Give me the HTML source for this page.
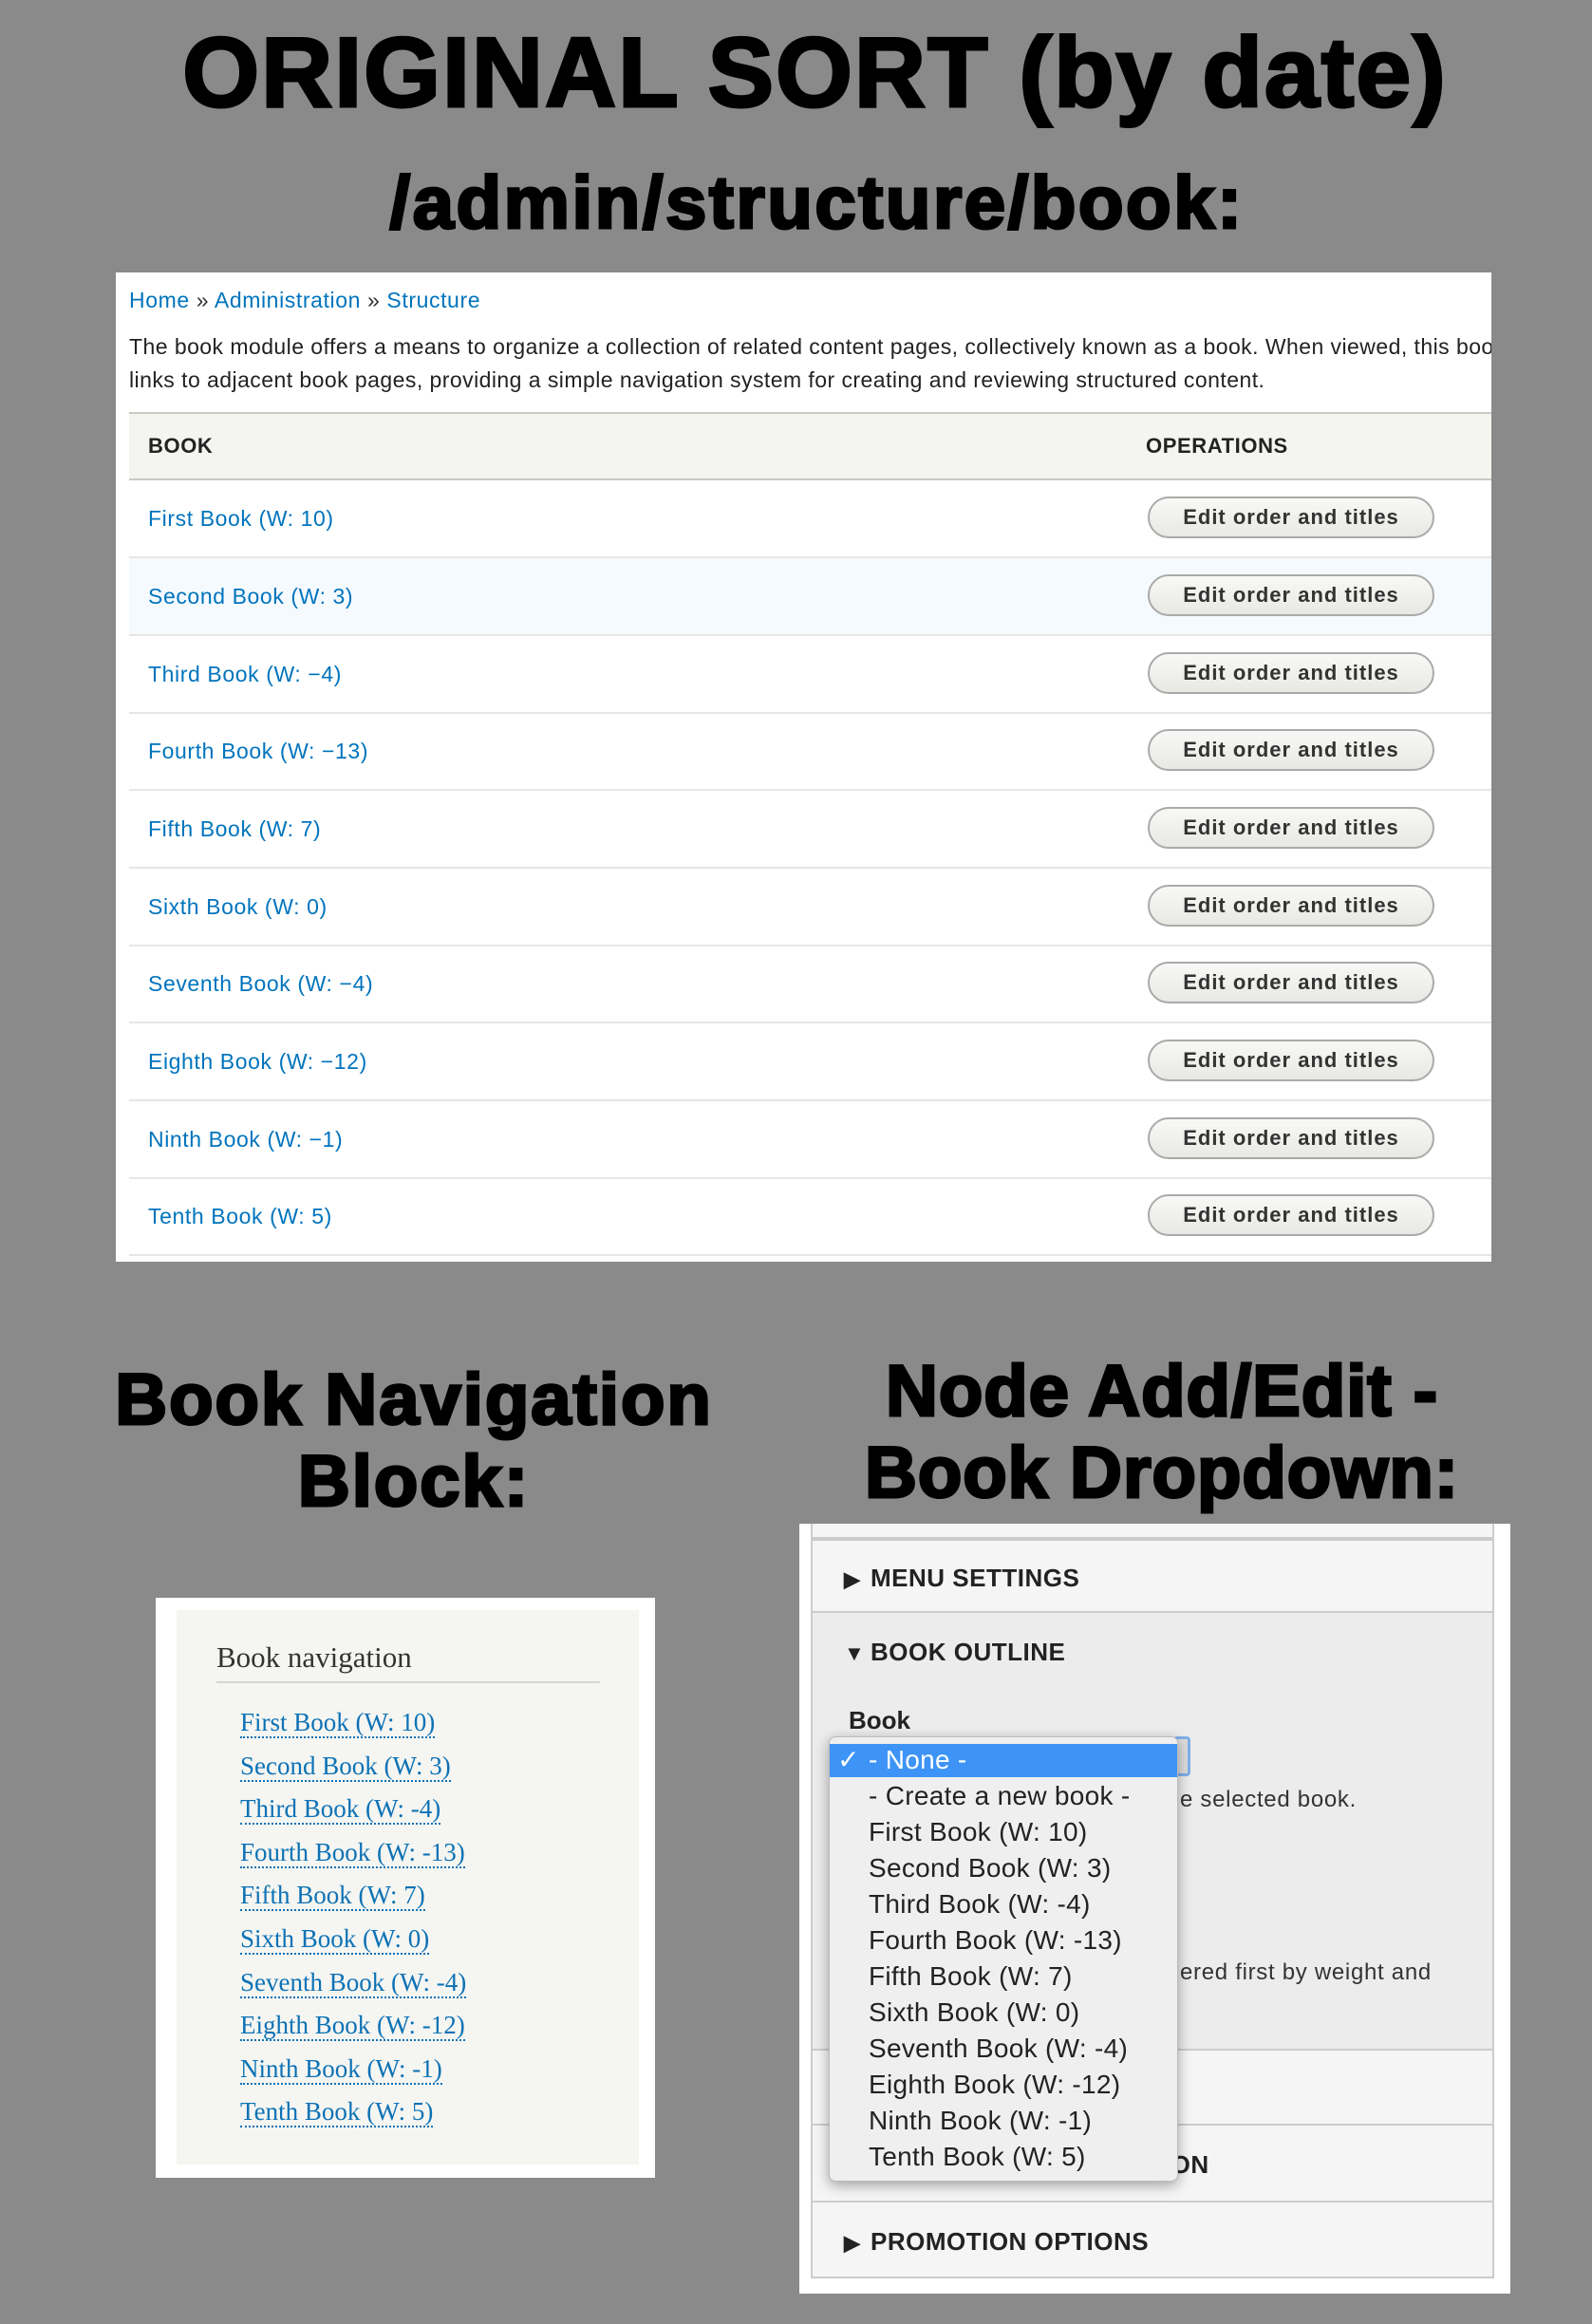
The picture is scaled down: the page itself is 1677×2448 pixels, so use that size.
<!DOCTYPE html>
<html><head><meta charset="utf-8"><style>
*{margin:0;padding:0;box-sizing:border-box}
body{width:1677px;height:2448px;background:#8a8a8a;position:relative;overflow:hidden;font-family:"Liberation Sans",sans-serif}
.h{position:absolute;font-weight:900;color:#000;text-align:center;white-space:nowrap;letter-spacing:2px;-webkit-text-stroke:3px #000}
.a{position:absolute;white-space:nowrap}
#main{position:absolute;left:122px;top:287px;width:1449px;height:1042px;background:#fff;overflow:hidden}
#main a{color:#0074bd;text-decoration:none}
.row{position:absolute;left:14px;width:1500px;height:82px;border-bottom:2px solid #e6e6e3}
.row span{position:absolute;left:20px;top:27px;font-size:23px;letter-spacing:.6px;color:#0074bd}
.btn{position:absolute;left:1073px;top:17px;width:302px;height:44px;border:2px solid #aaa;border-radius:22px;background:linear-gradient(#f8f8f6,#e8e8e4);font-size:22px;font-weight:bold;color:#333;text-align:center;line-height:40px;letter-spacing:1px}
#nav{position:absolute;left:164px;top:1683px;width:526px;height:611px;background:#fff}
#navi{position:absolute;left:22px;top:13px;width:487px;height:584px;background:#f5f5f2;font-family:"Liberation Serif",serif}
.nl{position:absolute;left:67px;font-size:27px;color:#0d72b5;border-bottom:2px dotted #0d72b5;line-height:30px}
#node{position:absolute;left:842px;top:1605px;width:749px;height:811px;background:#fff}
.sec{position:absolute;left:12px;width:720px;border:2px solid #ccc;border-top:none;background:#f5f5f5}
.st{position:absolute;left:33px;font-size:26px;font-weight:bold;color:#222;letter-spacing:.5px}
.st i{font-style:normal;font-size:22px;margin-right:10px;display:inline-block;width:18px}
#dd{position:absolute;left:873px;top:1829px;width:368px;height:469px;background:#efefef;border:1px solid #bbb;border-radius:7px;box-shadow:0 4px 14px rgba(0,0,0,.35)}
.di{position:absolute;left:41px;font-size:28px;color:#222;line-height:38px;letter-spacing:.3px}
</style></head><body>
<div class="h" style="left:20px;width:1677px;top:18px;font-size:104px">ORIGINAL SORT (by date)</div>
<div class="h" style="left:22px;width:1677px;top:168px;font-size:78px;letter-spacing:2.5px">/admin/structure/book:</div>

<div id="main">
<div class="a" style="left:14px;top:16px;font-size:23px;letter-spacing:.6px;color:#333"><a>Home</a> » <a>Administration</a> » <a>Structure</a></div>
<div class="a" style="left:14px;top:61px;font-size:23px;letter-spacing:.45px;color:#222;line-height:35px">The book module offers a means to organize a collection of related content pages, collectively known as a book. When viewed, this book's pages<br>links to adjacent book pages, providing a simple navigation system for creating and reviewing structured content.</div>
<div style="position:absolute;left:14px;top:147px;width:1500px;height:72px;background:#f4f4f0;border-top:2px solid #c8c8c5;border-bottom:2px solid #c8c8c5"></div>
<div class="a" style="left:34px;top:170px;font-size:22px;font-weight:bold;color:#222;letter-spacing:.6px">BOOK</div>
<div class="a" style="left:1085px;top:170px;font-size:22px;font-weight:bold;color:#222;letter-spacing:.6px">OPERATIONS</div>
<div class="row" style="top:219px"><span>First Book (W: 10)</span><div class="btn">Edit order and titles</div></div>
<div class="row" style="top:301px;background:#f5faff"><span>Second Book (W: 3)</span><div class="btn">Edit order and titles</div></div>
<div class="row" style="top:383px"><span>Third Book (W: −4)</span><div class="btn">Edit order and titles</div></div>
<div class="row" style="top:464px"><span>Fourth Book (W: −13)</span><div class="btn">Edit order and titles</div></div>
<div class="row" style="top:546px"><span>Fifth Book (W: 7)</span><div class="btn">Edit order and titles</div></div>
<div class="row" style="top:628px"><span>Sixth Book (W: 0)</span><div class="btn">Edit order and titles</div></div>
<div class="row" style="top:709px"><span>Seventh Book (W: −4)</span><div class="btn">Edit order and titles</div></div>
<div class="row" style="top:791px"><span>Eighth Book (W: −12)</span><div class="btn">Edit order and titles</div></div>
<div class="row" style="top:873px"><span>Ninth Book (W: −1)</span><div class="btn">Edit order and titles</div></div>
<div class="row" style="top:954px"><span>Tenth Book (W: 5)</span><div class="btn">Edit order and titles</div></div>
</div>

<div class="h" style="left:76px;width:720px;top:1432px;font-size:76px;line-height:86px;letter-spacing:2px">Book Navigation<br>Block:</div>
<div class="h" style="left:864px;width:720px;top:1423px;font-size:76px;line-height:86px;letter-spacing:1px">Node Add/Edit -<br>Book Dropdown:</div>

<div id="nav"><div id="navi">
<div class="a" style="left:42px;top:32px;font-size:31px;color:#333">Book navigation</div>
<div style="position:absolute;left:42px;top:75px;width:404px;height:2px;background:#d6d6d6"></div>
<div class="nl" style="top:103px">First Book (W: 10)</div>
<div class="nl" style="top:149px">Second Book (W: 3)</div>
<div class="nl" style="top:194px">Third Book (W: -4)</div>
<div class="nl" style="top:240px">Fourth Book (W: -13)</div>
<div class="nl" style="top:285px">Fifth Book (W: 7)</div>
<div class="nl" style="top:331px">Sixth Book (W: 0)</div>
<div class="nl" style="top:377px">Seventh Book (W: -4)</div>
<div class="nl" style="top:422px">Eighth Book (W: -12)</div>
<div class="nl" style="top:468px">Ninth Book (W: -1)</div>
<div class="nl" style="top:513px">Tenth Book (W: 5)</div>
</div></div>

<div id="node">
<div class="sec" style="top:0;height:16px"></div>
<div class="sec" style="top:16px;height:78px;border-top:2px solid #ccc"><div class="st" style="top:24px"><i>▶</i>MENU SETTINGS</div></div>
<div class="sec" style="top:94px;height:461px;background:#ececec"><div class="st" style="top:26px"><i>▼</i>BOOK OUTLINE</div>
<div class="a" style="left:38px;top:98px;font-size:26px;font-weight:bold;color:#222">Book</div>
<div style="position:absolute;left:380px;top:130px;width:18px;height:42px;background:#ddd;border:3px solid #7fb0ea;border-radius:4px"></div>
<div class="a" style="left:387px;top:183px;font-size:24px;letter-spacing:.7px;color:#333">e selected book.</div>
<div class="a" style="left:387px;top:365px;font-size:24px;letter-spacing:.7px;color:#333">ered first by weight and</div>
</div>
<div class="sec" style="top:555px;height:79px"></div>
<div class="sec" style="top:634px;height:81px"><div class="st" style="top:26px"><i>▶</i>AUTHORING INFORMATION</div></div>
<div class="sec" style="top:715px;height:80px"><div class="st" style="top:26px"><i>▶</i>PROMOTION OPTIONS</div></div>
</div>

<div id="dd">
<div style="position:absolute;left:0;top:7px;width:366px;height:35px;background:#3d94f6"></div>
<div class="di" style="left:8px;top:5px;color:#fff">✓</div>
<div class="di" style="top:5px;color:#fff">- None -</div>
<div class="di" style="top:43px">- Create a new book -</div>
<div class="di" style="top:81px">First Book (W: 10)</div>
<div class="di" style="top:119px">Second Book (W: 3)</div>
<div class="di" style="top:157px">Third Book (W: -4)</div>
<div class="di" style="top:195px">Fourth Book (W: -13)</div>
<div class="di" style="top:233px">Fifth Book (W: 7)</div>
<div class="di" style="top:271px">Sixth Book (W: 0)</div>
<div class="di" style="top:309px">Seventh Book (W: -4)</div>
<div class="di" style="top:347px">Eighth Book (W: -12)</div>
<div class="di" style="top:385px">Ninth Book (W: -1)</div>
<div class="di" style="top:423px">Tenth Book (W: 5)</div>
</div>
</body></html>
